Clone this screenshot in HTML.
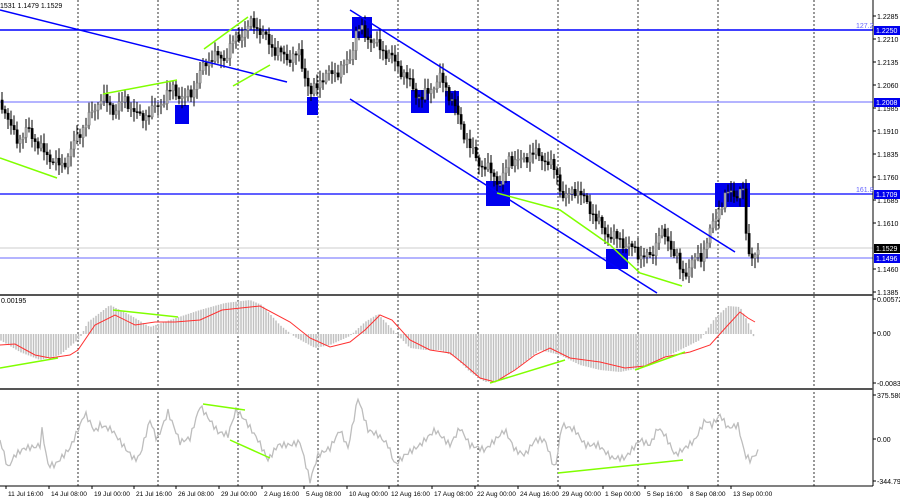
<!DOCTYPE html>
<html><head><meta charset="utf-8"><style>
html,body{margin:0;padding:0;background:#fff;width:900px;height:500px;overflow:hidden}
svg{display:block}
text{font-family:"Liberation Sans",sans-serif;font-size:7px;fill:#000}
#dates text{font-size:6.6px}
</style></head><body>
<svg id="s" width="900" height="500" viewBox="0 0 900 500" xmlns="http://www.w3.org/2000/svg">
<rect width="900" height="500" fill="#fff"/>
<g id="grid" stroke="#000" stroke-width="0.8" stroke-dasharray="2,2"></g>
<line x1="0" y1="30" x2="873" y2="30" stroke="#0000ff" stroke-width="1.5"/>
<line x1="0" y1="102" x2="873" y2="102" stroke="#8888ff" stroke-width="1.2"/>
<line x1="0" y1="194" x2="873" y2="194" stroke="#0000ff" stroke-width="1.2"/>
<line x1="0" y1="258" x2="873" y2="258" stroke="#8888ff" stroke-width="1.2"/>
<line x1="0" y1="248" x2="873" y2="248" stroke="#ccc" stroke-width="1"/>
<g fill="#0000ee">
<rect x="175" y="105" width="14" height="19"/><rect x="307" y="97" width="11" height="18"/>
<rect x="352" y="17" width="20" height="21"/><rect x="411" y="90" width="18" height="23"/>
<rect x="445" y="91" width="14" height="22"/><rect x="486" y="181" width="24" height="25"/>
<rect x="606" y="249" width="22" height="20"/><rect x="715" y="183" width="35" height="24"/>
</g>
<g id="price"></g>
<g stroke="#0000ff" stroke-width="1.5">
<line x1="0" y1="10" x2="287" y2="82"/>
<line x1="350" y1="10" x2="735" y2="252"/>
<line x1="350" y1="99" x2="657" y2="293"/>
</g>
<g stroke="#80ff00" stroke-width="1.5" fill="none">
<line x1="0" y1="158" x2="57" y2="178"/>
<line x1="103" y1="94" x2="177" y2="80"/>
<line x1="204" y1="49" x2="248" y2="17"/>
<line x1="233" y1="86" x2="270" y2="65"/>
<polyline points="497,193 560,210 610,245 640,273 682,286"/>
</g>
<line x1="873" y1="0" x2="873" y2="486" stroke="#000" stroke-width="1"/>
<rect x="0" y="294" width="873" height="2" fill="#555"/>
<rect x="0" y="388" width="873" height="2" fill="#555"/>
<line x1="0" y1="486" x2="873" y2="486" stroke="#000"/>
<g id="macd"></g>
<g id="cci"></g>
<text x="0" y="8">1531 1.1479 1.1529</text>
<text x="1" y="303">0.00195</text>
<g id="axis"></g>
<g id="dates"></g>
</svg>
<script>
var NS="http://www.w3.org/2000/svg";
function el(p,t,a){var e=document.createElementNS(NS,t);for(var k in a)e.setAttribute(k,a[k]);document.getElementById(p).appendChild(e);return e;}
function interp(pts,x){for(var i=0;i<pts.length-1;i++){if(x>=pts[i][0]&&x<=pts[i+1][0]){var t=(x-pts[i][0])/(pts[i+1][0]-pts[i][0]);return pts[i][1]+t*(pts[i+1][1]-pts[i][1]);}}return pts[pts.length-1][1];}
[78,158,238,318,398,478,558,638,718,814].forEach(function(x){el("grid","line",{x1:x,y1:0,x2:x,y2:486});});
var P=[[0,100],[8,125],[18,140],[28,130],[40,150],[52,160],[60,168],[70,150],[80,130],[90,115],[100,97],[112,110],[125,100],[138,118],[150,112],[162,100],[172,88],[182,100],[192,90],[203,65],[212,55],[222,60],[232,42],[245,30],[252,22],[262,35],[272,48],[285,58],[298,55],[310,95],[320,78],[335,72],[348,62],[356,28],[365,35],[375,45],[388,55],[400,70],[410,85],[420,100],[430,88],[440,78],[450,98],[460,125],[470,150],[480,165],[490,172],[500,185],[508,158],[520,162],[530,152],[545,160],[555,172],[563,200],[575,188],[590,210],[603,232],[618,240],[630,248],[640,255],[650,258],[658,232],[668,242],[676,258],[681,278],[690,262],[700,256],[710,230],[718,208],[728,192],[738,194],[742,190],[745,238],[750,256],[756,254],[759,249]];
var prev=interp(P,0);
for(var x=1;x<=759;x+=3){var c=interp(P,x)+Math.sin(x*1.7)*4+Math.sin(x*0.9)*3;var o=prev;var hi=Math.min(o,c)-2-Math.abs(Math.sin(x*2.3))*8;var lo=Math.max(o,c)+2+Math.abs(Math.cos(x*1.3))*8;
el("price","line",{x1:x+1,y1:hi,x2:x+1,y2:lo,stroke:"#000","stroke-width":1});
el("price","rect",{x:x,y:Math.min(o,c),width:2.2,height:Math.max(1,Math.abs(c-o)),fill:c<o?"#aaa":"#000",stroke:c<o?"#777":"#000","stroke-width":0.5});prev=c;}
var H=[[0,340],[20,352],[40,360],[60,355],[80,338],[88,322],[110,305],[130,315],[150,327],[170,320],[200,310],[225,303],[250,300],[262,305],[280,325],[295,337],[315,348],[330,345],[350,336],[365,322],[378,314],[395,332],[410,348],[425,350],[440,350],[455,357],[470,372],[485,382],[500,381],[520,366],[540,350],[560,355],[580,365],[600,370],[620,372],[640,368],[660,360],[680,350],[700,340],[715,318],[728,306],[740,307],[748,322],[755,340]];
for(var x=1;x<=755;x+=2.5){var y=interp(H,x);el("macd","line",{x1:x,y1:334,x2:x,y2:y,stroke:"#c0c0c0","stroke-width":1.5});}
var R=[[0,345],[15,344],[35,355],[50,358],[70,355],[78,350],[95,325],[115,315],[135,325],[155,322],[175,322],[200,320],[222,310],[260,306],[290,322],[310,338],[330,347],[350,342],[365,330],[380,315],[392,320],[410,340],[430,350],[450,353],[465,365],[480,378],[495,382],[515,370],[535,355],[550,348],[570,358],[600,362],[625,368],[645,366],[665,357],[690,352],[710,345],[728,325],[740,312],[748,318],[755,322]];
el("macd","polyline",{points:R.map(function(p){return p.join(",")}).join(" "),fill:"none",stroke:"#ff3030","stroke-width":1});
el("macd","line",{x1:0,y1:368,x2:58,y2:358,stroke:"#80ff00","stroke-width":1.5});
el("macd","line",{x1:113,y1:310,x2:178,y2:317,stroke:"#80ff00","stroke-width":1.5});
el("macd","line",{x1:490,y1:383,x2:565,y2:360,stroke:"#80ff00","stroke-width":1.5});
el("macd","line",{x1:635,y1:370,x2:685,y2:352,stroke:"#80ff00","stroke-width":1.5});
var C=[[0,440],[8,468],[15,455],[25,448],[35,447],[40,445],[42,430],[48,465],[55,465],[70,448],[78,430],[85,413],[95,432],[100,425],[112,430],[125,448],[135,460],[140,455],[150,420],[157,440],[168,412],[180,442],[190,438],[200,406],[218,432],[228,435],[236,410],[245,420],[258,440],[268,460],[278,445],[290,445],[300,442],[310,481],[318,455],[330,448],[340,430],[348,448],[358,398],[368,430],[378,435],[388,445],[395,465],[405,455],[420,445],[435,430],[450,445],[460,428],[470,445],[485,450],[495,440],[505,430],[515,450],[525,455],[535,440],[545,440],[555,470],[562,425],[575,430],[585,445],[598,445],[612,458],[625,458],[640,440],[650,445],[658,428],[665,435],[675,455],[685,448],[695,440],[705,420],[712,425],[720,415],[728,428],[738,425],[745,455],[750,460],[758,452]];
var pts=[];for(var x=0;x<=758;x+=2){pts.push(x+","+(interp(C,x)+Math.sin(x*1.3)*3).toFixed(1));}
el("cci","polyline",{points:pts.join(" "),fill:"none",stroke:"#bdbdbd","stroke-width":1.3});
el("cci","line",{x1:203,y1:404,x2:245,y2:410,stroke:"#80ff00","stroke-width":1.5});
el("cci","line",{x1:230,y1:440,x2:270,y2:458,stroke:"#80ff00","stroke-width":1.5});
el("cci","line",{x1:558,y1:473,x2:683,y2:460,stroke:"#80ff00","stroke-width":1.5});
var L=[["1.2285",19],["1.2210",42],["1.2135",65],["1.2060",88],["1.1985",111],["1.1910",134],["1.1835",157],["1.1760",180],["1.1685",203],["1.1610",226],["1.1460",272],["1.1385",295],["0.00572",302],["0.00",336],["-0.00831",386],["375.5808",398],["0.00",442],["-344.798",484]];
L.forEach(function(l){el("axis","line",{x1:873,y1:l[1]-3,x2:876,y2:l[1]-3,stroke:"#000"});var t=el("axis","text",{x:877,y:l[1]});t.textContent=l[0];});
[["1.2250",30,"#0000ee"],["1.2008",102,"#0000ee"],["1.1709",194,"#0000ee"],["1.1529",248,"#000"],["1.1496",258,"#0000ee"]].forEach(function(b){el("axis","rect",{x:874,y:b[1]-4,width:26,height:9,fill:b[2]});var t=el("axis","text",{x:876,y:b[1]+3,style:"fill:#fff"});t.textContent=b[0];});
var t1=el("axis","text",{x:856,y:28,style:"fill:#6666ff"});t1.textContent="127.2";
var t2=el("axis","text",{x:856,y:192,style:"fill:#6666ff"});t2.textContent="161.8";
var D=[["11 Jul 16:00",8],["14 Jul 08:00",51],["19 Jul 00:00",94],["21 Jul 16:00",136],["26 Jul 08:00",178],["29 Jul 00:00",221],["2 Aug 16:00",264],["5 Aug 08:00",306],["10 Aug 00:00",349],["12 Aug 16:00",391],["17 Aug 08:00",434],["22 Aug 00:00",477],["24 Aug 16:00",520],["29 Aug 00:00",562],["1 Sep 00:00",605],["5 Sep 16:00",647],["8 Sep 08:00",690],["13 Sep 00:00",733]];
D.forEach(function(d){var t=el("dates","text",{x:d[1],y:496});t.textContent=d[0];el("dates","line",{x1:d[1]-2,y1:486,x2:d[1]-2,y2:489,stroke:"#000"});});
</script>
</body></html>
